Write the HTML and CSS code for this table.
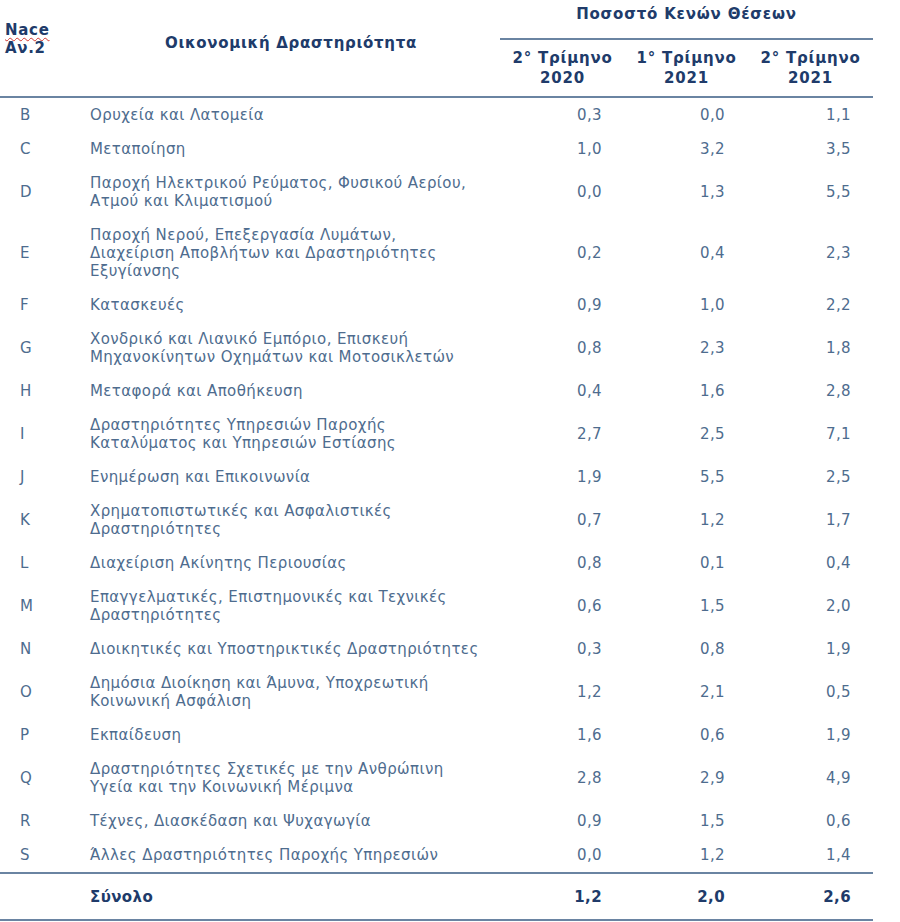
FILE: index.html
```html
<!DOCTYPE html>
<html lang="el">
<head>
<meta charset="utf-8">
<link rel="stylesheet" href="styles.css">
</head>
<body>
<table class="vac">
  <colgroup>
    <col class="c-code"><col class="c-desc"><col class="c-n1"><col class="c-n2"><col class="c-n3">
  </colgroup>
  <thead>
    <tr class="h1">
      <th class="hcode" rowspan="2"><span class="squig">Nace</span><br>Αν.2</th>
      <th class="hdesc" rowspan="2">Οικονομική Δραστηριότητα</th>
      <th class="hgroup" colspan="3">Ποσοστό Κενών Θέσεων</th>
    </tr>
    <tr class="h2">
      <th class="hsub">2° Τρίμηνο<br>2020</th>
      <th class="hsub">1° Τρίμηνο<br>2021</th>
      <th class="hsub">2° Τρίμηνο<br>2021</th>
    </tr>
  </thead>
  <tbody>
    <tr><td class="code">B</td><td class="desc">Ορυχεία και Λατομεία</td><td class="num">0,3</td><td class="num">0,0</td><td class="num n3">1,1</td></tr>
    <tr><td class="code">C</td><td class="desc">Μεταποίηση</td><td class="num">1,0</td><td class="num">3,2</td><td class="num n3">3,5</td></tr>
    <tr><td class="code">D</td><td class="desc">Παροχή Ηλεκτρικού Ρεύματος, Φυσικού Αερίου,<br>Ατμού και Κλιματισμού</td><td class="num">0,0</td><td class="num">1,3</td><td class="num n3">5,5</td></tr>
    <tr><td class="code">E</td><td class="desc">Παροχή Νερού, Επεξεργασία Λυμάτων,<br>Διαχείριση Αποβλήτων και Δραστηριότητες<br>Εξυγίανσης</td><td class="num">0,2</td><td class="num">0,4</td><td class="num n3">2,3</td></tr>
    <tr><td class="code">F</td><td class="desc">Κατασκευές</td><td class="num">0,9</td><td class="num">1,0</td><td class="num n3">2,2</td></tr>
    <tr><td class="code">G</td><td class="desc">Χονδρικό και Λιανικό Εμπόριο, Επισκευή<br>Μηχανοκίνητων Οχημάτων και Μοτοσικλετών</td><td class="num">0,8</td><td class="num">2,3</td><td class="num n3">1,8</td></tr>
    <tr><td class="code">H</td><td class="desc">Μεταφορά και Αποθήκευση</td><td class="num">0,4</td><td class="num">1,6</td><td class="num n3">2,8</td></tr>
    <tr><td class="code">I</td><td class="desc">Δραστηριότητες Υπηρεσιών Παροχής<br>Καταλύματος και Υπηρεσιών Εστίασης</td><td class="num">2,7</td><td class="num">2,5</td><td class="num n3">7,1</td></tr>
    <tr><td class="code">J</td><td class="desc">Ενημέρωση και Επικοινωνία</td><td class="num">1,9</td><td class="num">5,5</td><td class="num n3">2,5</td></tr>
    <tr><td class="code">K</td><td class="desc">Χρηματοπιστωτικές και Ασφαλιστικές<br>Δραστηριότητες</td><td class="num">0,7</td><td class="num">1,2</td><td class="num n3">1,7</td></tr>
    <tr><td class="code">L</td><td class="desc">Διαχείριση Ακίνητης Περιουσίας</td><td class="num">0,8</td><td class="num">0,1</td><td class="num n3">0,4</td></tr>
    <tr><td class="code">M</td><td class="desc">Επαγγελματικές, Επιστημονικές και Τεχνικές<br>Δραστηριότητες</td><td class="num">0,6</td><td class="num">1,5</td><td class="num n3">2,0</td></tr>
    <tr><td class="code">N</td><td class="desc">Διοικητικές και Υποστηρικτικές Δραστηριότητες</td><td class="num">0,3</td><td class="num">0,8</td><td class="num n3">1,9</td></tr>
    <tr><td class="code">O</td><td class="desc">Δημόσια Διοίκηση και Άμυνα, Υποχρεωτική<br>Κοινωνική Ασφάλιση</td><td class="num">1,2</td><td class="num">2,1</td><td class="num n3">0,5</td></tr>
    <tr><td class="code">P</td><td class="desc">Εκπαίδευση</td><td class="num">1,6</td><td class="num">0,6</td><td class="num n3">1,9</td></tr>
    <tr><td class="code">Q</td><td class="desc">Δραστηριότητες Σχετικές με την Ανθρώπινη<br>Υγεία και την Κοινωνική Μέριμνα</td><td class="num">2,8</td><td class="num">2,9</td><td class="num n3">4,9</td></tr>
    <tr><td class="code">R</td><td class="desc">Τέχνες, Διασκέδαση και Ψυχαγωγία</td><td class="num">0,9</td><td class="num">1,5</td><td class="num n3">0,6</td></tr>
    <tr class="last"><td class="code">S</td><td class="desc">Άλλες Δραστηριότητες Παροχής Υπηρεσιών</td><td class="num">0,0</td><td class="num">1,2</td><td class="num n3">1,4</td></tr>
  </tbody>
  <tfoot>
    <tr class="total"><td class="code"></td><td class="desc">Σύνολο</td><td class="num">1,2</td><td class="num">2,0</td><td class="num n3">2,6</td></tr>
  </tfoot>
</table>
</body>
</html>
```

FILE: styles.css
```css
html, body {
  margin: 0;
  padding: 0;
  background: #ffffff;
}
body {
  font-family: "DejaVu Sans", Verdana, sans-serif;
  font-size: 15px;
  letter-spacing: 0.4px;
  color: #4e6c8e;
}
.vac {
  width: 873px;
  border-collapse: collapse;
  table-layout: fixed;
}
.c-code { width: 75px; }
.c-desc { width: 425px; }
.c-n1 { width: 125px; }
.c-n2 { width: 123px; }
.c-n3 { width: 125px; }

th {
  color: #203b6a;
  font-weight: bold;
  font-size: 15px;
  letter-spacing: 0.7px;
  line-height: 18px;
  padding: 0;
}
.hcode {
  text-align: left;
  vertical-align: top;
  padding: 21px 0 0 5px;
  border-bottom: 2px solid #6a84a2;
}
.squig {
  text-decoration: underline wavy #d0352f;
  text-decoration-thickness: 1px;
  text-underline-offset: 2px;
}
.hdesc {
  text-align: left;
  vertical-align: top;
  padding: 34px 0 0 90px;
  border-bottom: 2px solid #6a84a2;
}
.h1 { height: 39px; }
.hgroup {
  text-align: center;
  vertical-align: top;
  letter-spacing: 0.8px;
  padding: 5px 0 14px 0;
  border-bottom: 2px solid #6a84a2;
}
.hsub {
  text-align: center;
  vertical-align: top;
  letter-spacing: 0.8px;
  line-height: 20px;
  padding: 8px 0 8px 0;
  border-bottom: 2px solid #6a84a2;
}

td {
  padding: 8px 0;
  line-height: 18px;
  vertical-align: middle;
}
.code {
  padding-left: 20px;
}
.desc {
  padding-left: 15px;
}
.num {
  text-align: right;
  padding-right: 23px;
}
.num.n3 {
  padding-right: 22px;
}
.last td {
  border-bottom: 2px solid #6a84a2;
}
.total td {
  font-weight: bold;
  color: #203b6a;
  padding: 14px 0 13px 0;
  border-bottom: 2px solid #6a84a2;
}
.total .num { padding-right: 23px; }
.total .num.n3 { padding-right: 22px; }
.total .desc { padding-left: 15px; }
```
